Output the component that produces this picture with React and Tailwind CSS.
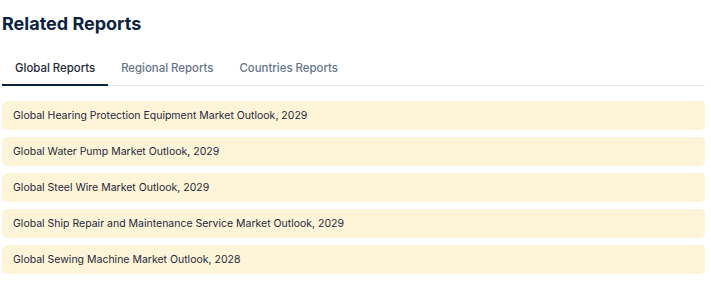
const reports = [
  "Global Hearing Protection Equipment Market Outlook, 2029",
  "Global Water Pump Market Outlook, 2029",
  "Global Steel Wire Market Outlook, 2029",
  "Global Ship Repair and Maintenance Service Market Outlook, 2029",
  "Global Sewing Machine Market Outlook, 2028",
];

const tabs = ["Global Reports", "Regional Reports", "Countries Reports"];

export default function App() {
  const active = 0;

  return (
    <div className="min-h-screen bg-white pl-[2px] pr-[6px] font-['Inter',sans-serif]">
      <h2 className="pt-[12px] text-[18px] font-bold leading-6 text-[#0c2340]">
        Related Reports
      </h2>

      <div className="mt-[24px] flex border-b border-[#e5e7eb]">
        {tabs.map((tab, i) => (
          <button
            key={tab}
            className={`-mb-px px-[13px] pb-[8px] text-[11.4px] font-medium leading-4 ${
              i === active
                ? "border-b-2 border-[#0c2340] text-[#1f2937]"
                : "border-b-2 border-transparent text-[#64748b]"
            }`}
          >
            {tab}
          </button>
        ))}
      </div>

      <div className="mt-[15px] flex flex-col gap-[7px]">
        {reports.map((item) => (
          <div
            key={item}
            className="flex h-[29px] items-center rounded-[5px] bg-[#fef4d8] px-[11px] text-[10.5px] text-[#1e293b]"
          >
            {item}
          </div>
        ))}
      </div>
    </div>
  );
}
